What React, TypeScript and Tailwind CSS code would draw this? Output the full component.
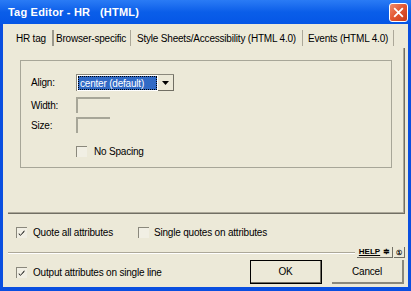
import React from "react";

const font = { fontFamily: '"Liberation Sans", Arial, sans-serif' };

function Check({ checked }: { checked?: boolean }) {
  return (
    <div className="relative h-[11px] w-[11px] shrink-0 border-l border-t border-[#8a887c] bg-[#f1efe4]">
      {checked && (
        <svg viewBox="0 0 10 10" className="absolute left-[1px] top-[1px] h-[8px] w-[8px]">
          <path d="M1 5 L3 7.5 L8 1.5 L8 3.5 L3 8.5 L1 6.5 Z" fill="#000" />
        </svg>
      )}
    </div>
  );
}

function Tab({ label, w, pl, thick }: { label: string; w: string; pl: string; thick?: boolean }) {
  return (
    <div
      className={`flex h-[16px] items-center whitespace-nowrap ${w} ${pl} ${
        thick ? "border-r-2 border-[#9a988c]" : "border-r border-[#aca899]"
      }`}
    >
      {label}
    </div>
  );
}

export default function App() {
  return (
    <div
      className="flex h-[291px] w-[411px] flex-col bg-[#0a4fe0] text-[10px] tracking-[-0.2px] text-black"
      style={font}
    >
      {/* title bar */}
      <div className="flex h-[24px] shrink-0 items-center justify-between bg-gradient-to-b from-[#2a7bf5] via-[#0a5ee9] to-[#0656e6] pl-[8px] pr-[3px]">
        <span className="whitespace-pre text-[11px] font-bold tracking-[0.2px] text-white">Tag Editor - HR   (HTML)</span>
        <div className="mt-[1px] flex h-[19px] w-[19px] items-center justify-center rounded-[3px] border border-white bg-gradient-to-br from-[#f08a6a] via-[#e2552f] to-[#c83a17]">
          <svg viewBox="0 0 12 12" className="h-[11px] w-[11px]">
            <path d="M2 2 L10 10 M10 2 L2 10" stroke="#fff" strokeWidth="2" strokeLinecap="square" />
          </svg>
        </div>
      </div>

      {/* body */}
      <div className="mx-[3px] flex h-[263px] shrink-0 flex-col bg-[#ece9d8]">
        {/* tabs */}
        <div className="flex h-[24px] items-start pl-[13px] pt-[6px]">
          <Tab label="HR tag" w="w-[38px]" pl="pl-0" thick />
          <Tab label="Browser-specific" w="w-[77px]" pl="pl-[2px]" />
          <Tab label="Style Sheets/Accessibility (HTML 4.0)" w="w-[172px]" pl="pl-[6px]" />
          <Tab label="Events (HTML 4.0)" w="w-[91px]" pl="pl-[5px]" />
        </div>

        {/* tab pane */}
        <div className="ml-[5px] h-[166px] w-[397px] border-b border-r border-[#716f64]">
          <div className="h-full w-full border-b border-r border-[#aca899] pl-[12px] pt-[12px]">
            <div className="flex h-[108px] w-[372px] flex-col border border-[#a7a698] pl-[10px]">
              <div className="mt-[13px] flex h-[17px] items-center">
                <span className="w-[45px]">Align:</span>
                <div className="flex h-[17px] w-[98px] border-l border-t border-[#8a887c] bg-white">
                  <div className="m-[1px] flex flex-1 items-center border border-dotted border-[#000] bg-[#316ac5] pl-[1px] text-white">
                    center (default)
                  </div>
                  <div className="flex w-[16px] items-center justify-center border-b border-r border-[#716f64] bg-[#ece9d8]">
                    <svg viewBox="0 0 7 4" className="h-[4px] w-[7px]">
                      <path d="M0 0 H7 L3.5 4 Z" fill="#000" />
                    </svg>
                  </div>
                </div>
              </div>
              <div className="mt-[6px] flex h-[16px] items-center">
                <span className="w-[45px]">Width:</span>
                <div className="h-[16px] w-[34px] border-l-2 border-t-2 border-[#a7a698]" />
              </div>
              <div className="mt-[4px] flex h-[16px] items-center">
                <span className="w-[45px]">Size:</span>
                <div className="h-[16px] w-[34px] border-l-2 border-t-2 border-[#a7a698]" />
              </div>
              <div className="ml-[45px] mt-[13px] flex h-[11px] items-center gap-[7px]">
                <Check />
                <span>No Spacing</span>
              </div>
            </div>
          </div>
        </div>

        {/* options */}
        <div className="mt-[13px] flex h-[11px] items-center pl-[13px]">
          <Check checked />
          <span className="ml-[6px] w-[105px]">Quote all attributes</span>
          <Check />
          <span className="ml-[5px]">Single quotes on attributes</span>
        </div>

        <div className="mt-[9px] flex h-[11px] items-center pl-[5px] pr-[3px]">
          <div className="h-[2px] flex-1 border-b border-t border-b-white border-t-[#aca899]" />
          <div className="ml-[2px] flex h-[11px] w-[36px] items-center justify-center border-b border-r border-[#716f64] text-[8px] font-bold leading-none tracking-normal">
            <span className="underline">HELP</span>
            <span className="ml-[3px]">≑</span>
          </div>
          <div className="ml-[1px] flex h-[11px] w-[11px] items-center justify-center border-b border-r border-[#716f64] text-[7px] font-bold leading-none">
            ①
          </div>
        </div>

        <div className="mt-[2px] flex h-[24px] items-start pl-[13px] pr-[4px]">
          <div className="mt-[5px] flex items-center">
            <Check checked />
            <span className="ml-[6px]">Output attributes on single line</span>
          </div>
          <div className="ml-auto flex h-[24px] w-[72px] items-center justify-center border border-black">
            <div className="flex h-full w-full items-center justify-center border-b border-r border-[#716f64]">
              OK
            </div>
          </div>
          <div className="ml-[10px] flex h-[24px] w-[72px] items-center justify-center border-b-2 border-r-2 border-[#8a887c]">
            Cancel
          </div>
        </div>
      </div>
    </div>
  );
}
